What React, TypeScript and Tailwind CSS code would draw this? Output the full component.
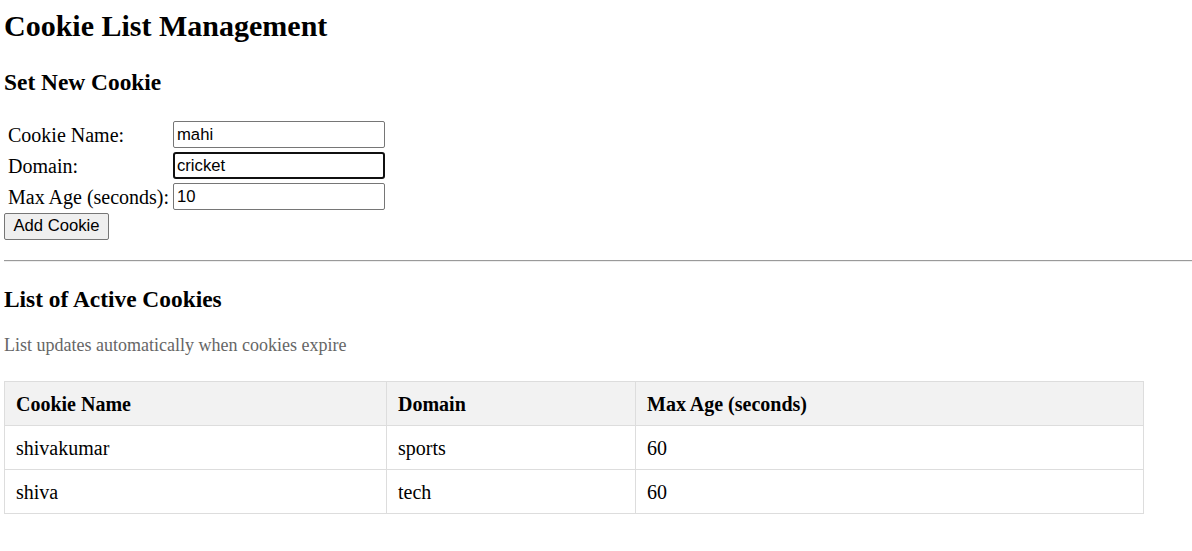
import React from "react";

const serif = { fontFamily: '"Liberation Serif", "Times New Roman", serif' };
const sans = { fontFamily: '"Liberation Sans", Arial, sans-serif' };

export default function App() {
  const rows = [
    { name: "shivakumar", domain: "sports", age: "60" },
    { name: "shiva", domain: "tech", age: "60" },
  ];
  return (
    <div className="bg-white text-black min-h-[551px] w-[1192px] overflow-hidden" style={serif}>
      <div className="pl-[4px]">
        <h1 className="mt-[9px] text-[30px] leading-[34px] font-bold">Cookie List Management</h1>
        <h2 className="mt-[25px] text-[23.4px] leading-[28px] font-bold">Set New Cookie</h2>
        <div className="mt-[25px] flex flex-col gap-[4px] text-[20px]">
          <div className="flex items-center h-[27px]">
            <span className="w-[169px] pl-[4px] leading-[24px]">Cookie Name:</span>
            <input
              className="w-[212px] h-[27px] border border-[#767676] rounded-[2px] px-[3px] text-[16.67px] outline-none"
              style={sans}
              defaultValue="mahi"
            />
          </div>
          <div className="flex items-center h-[27px]">
            <span className="w-[169px] pl-[4px] leading-[24px]">Domain:</span>
            <input
              className="w-[212px] h-[27px] border-2 border-[#101010] rounded-[3px] px-[2px] text-[16.67px] outline-none"
              style={sans}
              defaultValue="cricket"
            />
          </div>
          <div className="flex items-center h-[27px]">
            <span className="w-[169px] pl-[4px] leading-[24px]">Max Age (seconds):</span>
            <input
              className="w-[212px] h-[27px] border border-[#767676] rounded-[2px] px-[3px] text-[16.67px] outline-none"
              style={sans}
              defaultValue="10"
            />
          </div>
        </div>
        <button
          className="mt-[3px] w-[105px] h-[27px] border border-[#767676] rounded-[2px] bg-[#efefef] text-[16.67px] leading-none"
          style={sans}
        >
          Add Cookie
        </button>
        <div className="mt-[20px] h-[2px] border-t border-[#9a9a9a] border-b border-b-[#eeeeee] w-[1200px]" />
        <h2 className="mt-[23px] text-[23.4px] leading-[28px] font-bold">List of Active Cookies</h2>
        <p className="mt-[22px] text-[18px] leading-[20px] text-[#666666]">List updates automatically when cookies expire</p>
        <table className="mt-[26px] w-[1140px] border-collapse text-[20px]">
          <thead>
            <tr className="bg-[#f2f2f2] h-[44px]">
              <th className="border border-[#dddddd] text-left font-bold pl-[11px] w-[382px]">Cookie Name</th>
              <th className="border border-[#dddddd] text-left font-bold pl-[11px] w-[249px]">Domain</th>
              <th className="border border-[#dddddd] text-left font-bold pl-[11px]">Max Age (seconds)</th>
            </tr>
          </thead>
          <tbody>
            {rows.map((r) => (
              <tr key={r.name} className="h-[44px]">
                <td className="border border-[#dddddd] pl-[11px]">{r.name}</td>
                <td className="border border-[#dddddd] pl-[11px]">{r.domain}</td>
                <td className="border border-[#dddddd] pl-[11px]">{r.age}</td>
              </tr>
            ))}
          </tbody>
        </table>
      </div>
    </div>
  );
}
